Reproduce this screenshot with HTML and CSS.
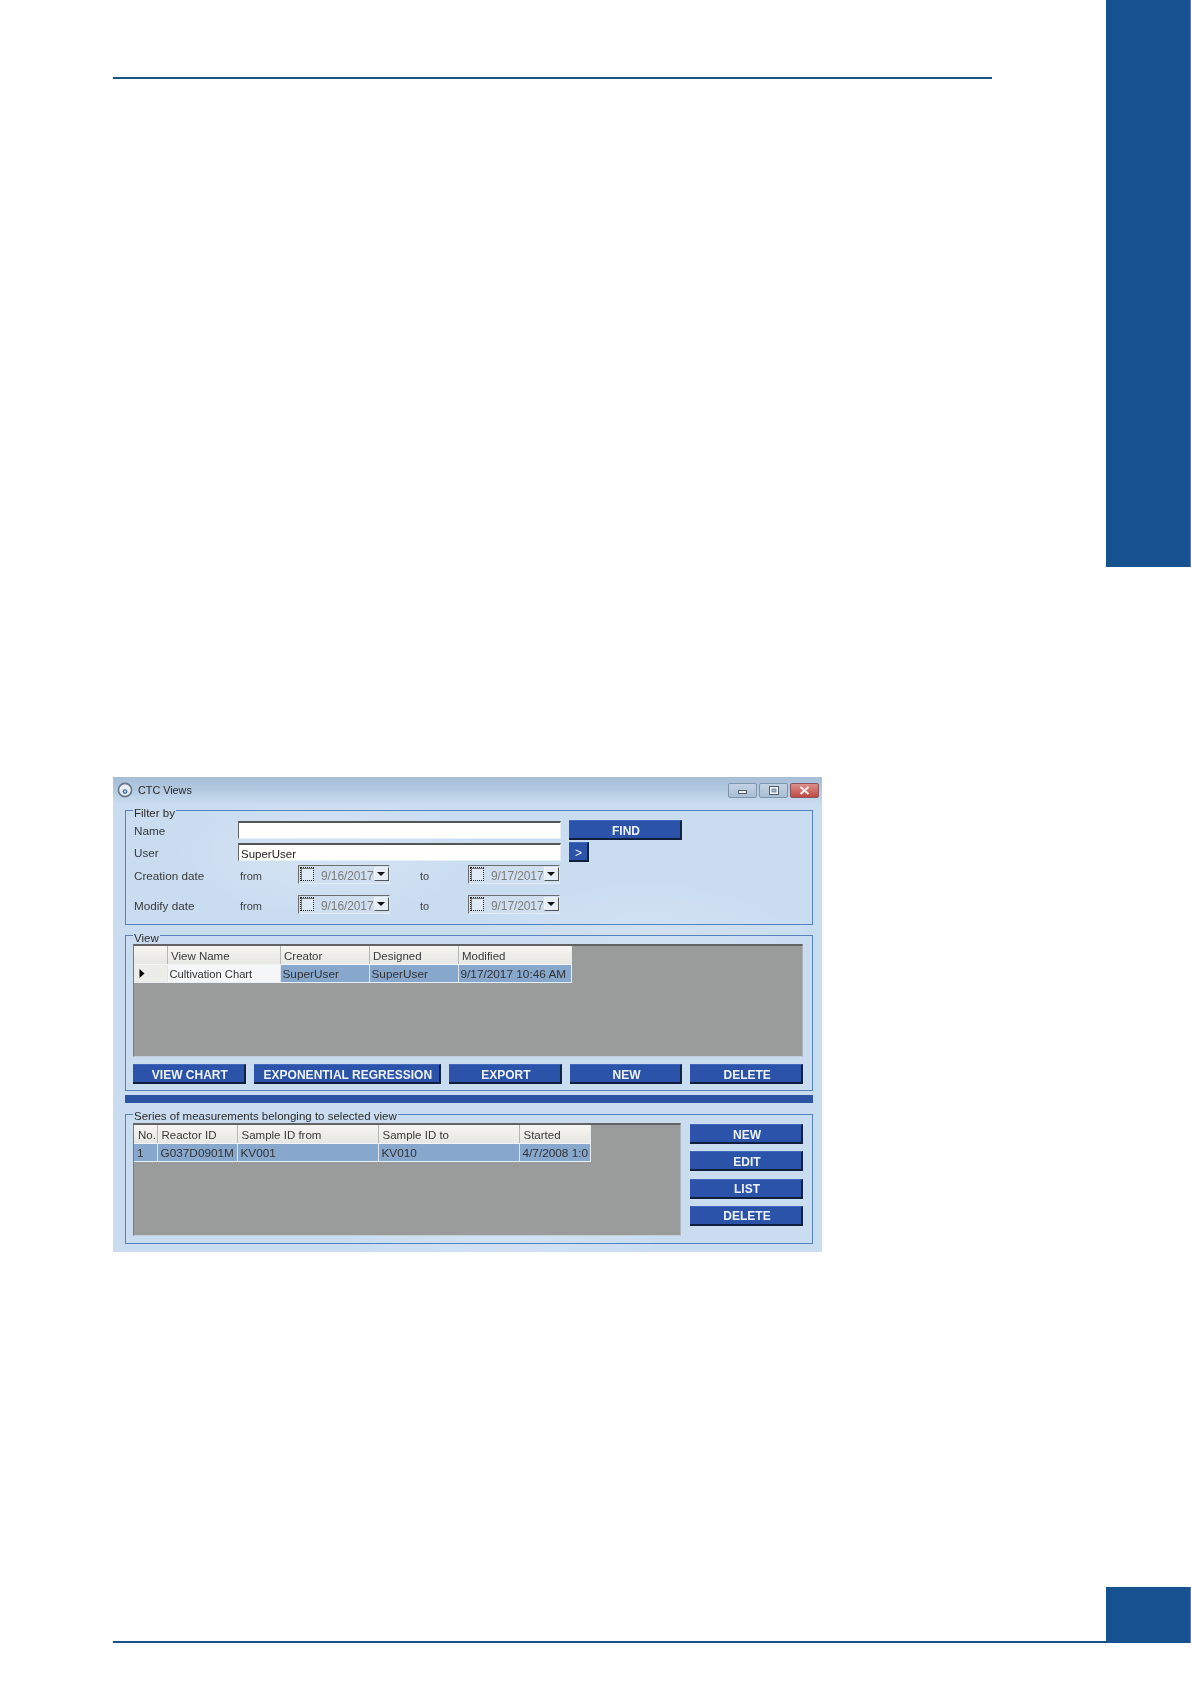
FILE: index.html
```html
<!DOCTYPE html>
<html lang="en">
<head>
<meta charset="utf-8">
<title>CTC Views</title>
<link rel="stylesheet" href="styles.css">
</head>
<body>
<div class="upper">
  <main class="main">
    <div class="top-rule"></div>
    <section class="window">
      <header class="titlebar">
        <svg class="app-icon" width="16" height="16" viewBox="0 0 16 16"><circle cx="8" cy="8" r="6.6" fill="#e9eef3" stroke="#66758a" stroke-width="1.6"/><circle cx="8" cy="9.6" r="2.4" fill="#3f6ea6"/><circle cx="8" cy="9.6" r="1" fill="#dfe9f3"/></svg>
        <span class="title">CTC Views</span>
        <div class="controls">
          <span class="ctl ctl-min"><svg width="9" height="7" viewBox="0 0 9 7"><rect x="0.5" y="3.5" width="8" height="3" fill="#eef3f8" stroke="#4f5d6d"/></svg></span>
          <span class="ctl ctl-max"><svg width="10" height="9" viewBox="0 0 10 9"><rect x="0.5" y="0.5" width="9" height="8" fill="#eef3f8" stroke="#4f5d6d"/><rect x="3" y="3" width="4" height="3" fill="#a9bdd2" stroke="#4f5d6d" stroke-width=".6"/></svg></span>
          <span class="ctl ctl-close"><svg width="11" height="9" viewBox="0 0 11 9"><path d="M1.5 1 L9.5 8 M9.5 1 L1.5 8" stroke="#f4eaea" stroke-width="2.2" fill="none"/></svg></span>
        </div>
      </header>

      <div class="group group-filter">
        <span class="legend">Filter by</span>
        <div class="row row-name">
          <label class="lbl">Name</label>
          <div class="input"></div>
          <button class="btn btn-find">FIND</button>
        </div>
        <div class="row row-user">
          <label class="lbl">User</label>
          <div class="input">SuperUser</div>
          <button class="btn btn-go">&gt;</button>
        </div>
        <div class="row row-date row-created">
          <label class="lbl">Creation date</label>
          <span class="from">from</span>
          <div class="date"><span class="check"></span><span class="date-val">9/16/2017</span><span class="drop"><svg width="8" height="4" viewBox="0 0 8 4"><path d="M0 0H8L4 4Z" fill="#111"/></svg></span></div>
          <span class="to">to</span>
          <div class="date"><span class="check"></span><span class="date-val">9/17/2017</span><span class="drop"><svg width="8" height="4" viewBox="0 0 8 4"><path d="M0 0H8L4 4Z" fill="#111"/></svg></span></div>
        </div>
        <div class="row row-date row-modified">
          <label class="lbl">Modify date</label>
          <span class="from">from</span>
          <div class="date"><span class="check"></span><span class="date-val">9/16/2017</span><span class="drop"><svg width="8" height="4" viewBox="0 0 8 4"><path d="M0 0H8L4 4Z" fill="#111"/></svg></span></div>
          <span class="to">to</span>
          <div class="date"><span class="check"></span><span class="date-val">9/17/2017</span><span class="drop"><svg width="8" height="4" viewBox="0 0 8 4"><path d="M0 0H8L4 4Z" fill="#111"/></svg></span></div>
        </div>
      </div>

      <div class="group group-view">
        <span class="legend">View</span>
        <div class="grid grid-view">
          <table>
            <colgroup><col class="c-rh"><col class="c-name"><col class="c-creator"><col class="c-designed"><col class="c-mod"></colgroup>
            <thead><tr><th></th><th class="hd-pad">View Name</th><th class="hd-pad">Creator</th><th class="hd-pad">Designed</th><th class="hd-pad">Modified</th></tr></thead>
            <tbody><tr><td class="rowhead"><svg width="6" height="9" viewBox="0 0 6 9"><path d="M0.5 0 L5.5 4.5 L0.5 9Z" fill="#000"/></svg></td><td class="current">Cultivation Chart</td><td>SuperUser</td><td>SuperUser</td><td>9/17/2017 10:46 AM</td></tr></tbody>
          </table>
        </div>
        <div class="view-actions">
          <button class="btn btn-chart">VIEW CHART</button>
          <button class="btn btn-exp">EXPONENTIAL REGRESSION</button>
          <button class="btn btn-std">EXPORT</button>
          <button class="btn btn-std">NEW</button>
          <button class="btn btn-std">DELETE</button>
        </div>
      </div>

      <div class="splitter"></div>

      <div class="group group-series">
        <span class="legend">Series of measurements belonging to selected view</span>
        <div class="grid grid-series">
          <table>
            <colgroup><col class="c-no"><col class="c-reactor"><col class="c-from"><col class="c-to"><col class="c-started"></colgroup>
            <thead><tr><th class="hd-no">No.</th><th>Reactor ID</th><th>Sample ID from</th><th>Sample ID to</th><th>Started</th></tr></thead>
            <tbody><tr><td>1</td><td>G037D0901M</td><td>KV001</td><td>KV010</td><td>4/7/2008 1:0</td></tr></tbody>
          </table>
        </div>
        <div class="series-actions">
          <button class="btn btn-std">NEW</button>
          <button class="btn btn-std">EDIT</button>
          <button class="btn btn-std">LIST</button>
          <button class="btn btn-std">DELETE</button>
        </div>
      </div>
    </section>
  </main>
  <aside class="tab tab-top"></aside>
</div>
<footer class="footer">
  <div class="footer-line-wrap"><div class="footer-line"></div></div>
  <aside class="tab tab-bottom"></aside>
</footer>
</body>
</html>
```
FILE: styles.css
```css
* { box-sizing: border-box; }
html, body { margin: 0; padding: 0; background: #fff; }
body { width: 1191px; font-family: "Liberation Sans", Arial, sans-serif; }

.upper { display: flex; align-items: flex-start; }
.main { width: 1106px; padding: 77px 0 0 113px; }
.top-rule { width: 879px; height: 2px; background: #1c5480; }
.tab { width: 85px; background: #15528f; border-right: 1px solid #4f7fb5; }
.tab-top { height: 567px; }

.footer { display: flex; align-items: flex-end; margin-top: 335px; }
.footer-line-wrap { width: 1106px; padding-left: 113px; }
.footer-line { height: 2px; background: #15528f; }
.tab-bottom { height: 56px; }

.window {
  width: 709px; height: 475px; margin-top: 698px;
  padding: 0 9px 0 12px;
  background:
    radial-gradient(ellipse 170px 70px at 30% 16%, rgba(255,255,255,.22), transparent),
    radial-gradient(ellipse 200px 60px at 75% 32%, rgba(255,255,255,.14), transparent),
    radial-gradient(ellipse 180px 50px at 55% 97%, rgba(255,255,255,.18), transparent),
    #c9dcf0;
  color: #2b2b2b;
  font-size: 11px;
  filter: blur(0.4px);
}
.titlebar {
  display: flex; align-items: center;
  height: 28px; margin: 0 -9px 5px -12px; padding: 0 3px 2px 4px;
  background: linear-gradient(180deg, #a6bdd6 0%, #b5cbe2 50%, #cbdef1 100%);
}
.app-icon { flex: none; }
.title { margin-left: 5px; font-size: 10.8px; color: #2a2a2a; }
.controls { display: flex; gap: 2px; margin-left: auto; }
.ctl { display: flex; align-items: center; justify-content: center; width: 29px; height: 15px; border: 1px solid #7f95ac; border-radius: 2px; background: linear-gradient(180deg, #c3d3e3, #a9bed3); }
.ctl-close { background: linear-gradient(180deg, #dc8f8c, #c04a44); border-color: #8c5660; }

.group { position: relative; border: 1px solid #5583bd; }
.legend { position: absolute; left: 7px; top: -4px; padding: 0 1px; background: #cadcf0; font-size: 11.5px; line-height: 12px; color: #2b2b2b; }
.group-series .legend { top: -5px; }

.group-filter { height: 115px; padding: 9px 0 0 8px; }
.row { display: flex; align-items: center; }
.row-name { height: 20px; }
.row-user { height: 20px; margin-top: 2px; }
.row-created { height: 20px; margin-top: 2px; }
.row-modified { height: 20px; margin-top: 10px; }
.lbl { width: 104px; flex: none; padding-top: 1px; color: #3a3a3a; font-size: 11.7px; }
.row-date .lbl, .row-date .from, .row-date .to { padding-top: 3px; }
.input { width: 323px; height: 18px; flex: none; padding-left: 2px; background: #fffefa; border: 1px solid #e8eef5; border-top: 2px solid #555; border-left: 1px solid #666; font-size: 11.5px; line-height: 18px; color: #222; }
.from { width: 60px; flex: none; padding-left: 2px; color: #444; }
.to { width: 78px; flex: none; padding-left: 30px; color: #444; }
.date { display: flex; align-items: center; width: 92px; height: 19px; flex: none; padding-left: 1px; border: 1px solid #6d6d6d; border-right-color: #dfe9f4; border-bottom-color: #e4edf7; background: #cfdff0; }
.check { width: 14px; height: 14px; flex: none; border: 1px dotted #222; background: #e0eaf5; box-shadow: inset 1px 1px 0 #777; }
.date-val { margin: 4px 0 0 7px; font-size: 12px; color: #7c7c7c; letter-spacing: -.1px; }
.drop { display: flex; align-items: center; justify-content: center; width: 16px; height: 14px; margin-left: auto; background: #e6edf4; border: 1px solid #eef3f8; border-right-color: #555; border-bottom-color: #555; }

.btn { display: block; height: 20px; padding: 2px 0 0 3px; font: bold 12px/1 "Liberation Sans", Arial, sans-serif; color: #eef3fb; background: #2b53a9; border: 0; border-right: 2px solid #12233f; border-bottom: 2px solid #0f1f3c; border-top: 1px solid #3f68bd; white-space: nowrap; }
.btn-find { width: 113px; margin-left: 8px; }
.btn-go { width: 20px; margin-left: 8px; font-weight: normal; padding-left: 1px; }
.btn-chart { width: 113px; }
.btn-exp { width: 188px; }
.btn-std { width: 113px; }

.grid { background: #9a9c9b; border-top: 2px solid #636363; border-left: 1px solid #7a7a7a; border-right: 1px solid #aeb4b8; border-bottom: 1px solid #c3cdd8; }
.grid table { border-collapse: collapse; table-layout: fixed; font-size: 11px; color: #333; }
.grid th { height: 18px; padding: 3px 0 0 4px; text-align: left; font-weight: normal; font-size: 11.5px; background: linear-gradient(180deg, #f6f5f1, #e6e6e2); border-right: 1px solid #b4b7b8; border-bottom: 1px solid #f2f4f6; color: #3a3a3a; overflow: hidden; white-space: nowrap; }
.grid th.hd-pad { padding-left: 3.5px; }
.grid td { height: 18px; padding: 2px 0 0 2px; background: #88a7cd; border-right: 1px solid #dbe5f0; border-bottom: 1px solid #e9eff6; font-size: 11.8px; color: #333; white-space: nowrap; overflow: hidden; }
.grid-series td { padding-left: 3px; }
.grid td.rowhead { background: #ecece8; padding-left: 5px; padding-top: 0; }
.grid td.rowhead svg { display: block; }
.grid td.current { background: #f4f6f8; font-size: 11.2px; padding-top: 1px; }
.grid td:last-child, .grid th:last-child { border-right: 1px solid #e6ebf1; }

.c-rh { width: 33px; }
.c-name { width: 113px; }
.c-creator { width: 89px; }
.c-designed { width: 89px; }
.c-mod { width: 113px; }
.c-no { width: 23px; }
.c-reactor { width: 80px; }
.c-from { width: 141px; }
.c-to { width: 141px; }
.c-started { width: 71px; }

.group-view { height: 156px; margin-top: 10px; padding: 8px 9px 0 7px; }
.grid-view { height: 113px; }
.view-actions { display: flex; gap: 8px; margin-top: 7px; }
.splitter { height: 8px; margin-top: 4px; background: #2b54a5; }
.group-series { display: flex; height: 130px; margin-top: 11px; padding: 8px 9px 0 7px; }
.grid-series { width: 548px; height: 113px; flex: none; }
.series-actions { display: flex; flex-direction: column; gap: 7.33px; margin: 1px 0 0 9px; }
```
